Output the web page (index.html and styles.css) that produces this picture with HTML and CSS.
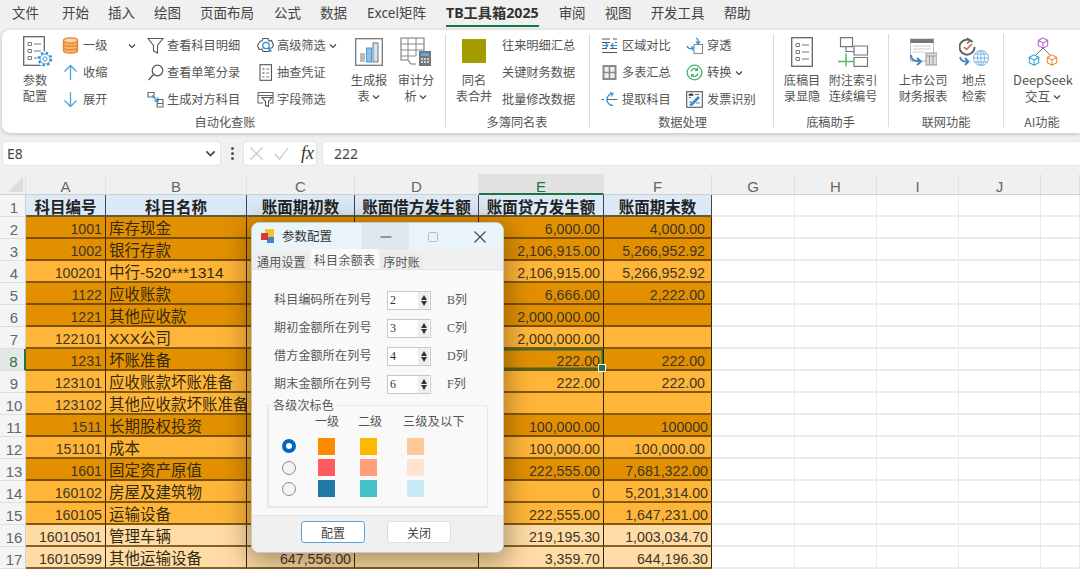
FILE: index.html
```html
<!DOCTYPE html>
<html lang="zh-CN">
<head>
<meta charset="utf-8">
<title>TB工具箱2025</title>
<link rel="stylesheet" href="styles.css">
</head>
<body>
<svg class="defs" aria-hidden="true">
  <symbol id="chev" viewBox="0 0 8 8"><path d="M1 2.5 4 5.5 7 2.5" fill="none" stroke="#444" stroke-width="1.2"/></symbol>
  <symbol id="gear" viewBox="0 0 20 20">
    <circle cx="10" cy="10" r="9.6" fill="#fff"/>
    <circle cx="10" cy="10" r="7.8" fill="none" stroke="#2e8fd8" stroke-width="2.6" stroke-dasharray="3 3.13"/>
    <circle cx="10" cy="10" r="6.2" fill="#fff" stroke="#2e8fd8" stroke-width="1.1"/>
    <circle cx="10" cy="10" r="2.7" fill="none" stroke="#2e8fd8" stroke-width="1.1"/>
  </symbol>
  <symbol id="cube" viewBox="0 0 14 14"><path d="M7 1 12.5 4v6.200L7 13 1.500 10.200V4ZM1.500 4 7 7l5.500-3M7 7v6" fill="none" stroke-width="1.200" stroke="currentColor"/></symbol>
  <symbol id="listdoc" viewBox="0 0 22 30">
    <rect x=".7" y=".7" width="20.600" height="28.600" fill="#fff" stroke="#666" stroke-width="1.300"/>
    <path d="M5 6.500h3.500v3H5zM5 13.500h3.500v3H5zM5 20.500h3.500v3H5z" fill="none" stroke="#777"/>
    <path d="M11 8h7M11 15h7M11 22h7" stroke="#777"/>
  </symbol>
</svg>
<div class="app">
  <nav class="menu">
    <span class="m-first">文件</span><span>开始</span><span>插入</span><span>绘图</span><span>页面布局</span><span class="m-gap">公式</span><span>数据</span><span class="m-gap">Excel矩阵</span><span class="on">TB工具箱2025</span><span>审阅</span><span>视图</span><span>开发工具</span><span>帮助</span>
  </nav>

  <section class="ribbon">
    <div class="group g1">
      <div class="tools">
        <div class="large c1">
          <div class="licon">
            <svg class="ic-params" viewBox="0 0 30 32"><use href="#listdoc" x="0" y="0" width="22" height="30"/><use href="#gear" x="14" y="15" width="16" height="16"/></svg>
          </div>
          <div class="ltext">参数<br>配置</div>
        </div>
        <div class="col c2">
          <div class="item wide">
            <svg class="ic" viewBox="0 0 17 17"><path d="M1.500 3.500v10c0 3.500 14 3.500 14 0v-10Z" fill="#f8b27a" stroke="#e8832a" stroke-width="1.300"/><ellipse cx="8.500" cy="3.500" rx="7" ry="2.600" fill="#fbd3a8" stroke="#e8832a" stroke-width="1.300"/><path d="M1.500 7c0 3 14 3 14 0M1.500 10.500c0 3 14 3 14 0" fill="none" stroke="#e8832a" stroke-width="1.300"/></svg>
            <span>一级</span><svg class="chev far" viewBox="0 0 8 8"><use href="#chev"/></svg>
          </div>
          <div class="item wide">
            <svg class="ic" viewBox="0 0 17 17"><path d="M8.500 16V1.500M2.500 7.500l6-6 6 6" fill="none" stroke="#49a6dd" stroke-width="1.300"/></svg>
            <span>收缩</span>
          </div>
          <div class="item wide">
            <svg class="ic" viewBox="0 0 17 17"><path d="M8.500 1v14.500M2.500 9.500l6 6 6-6" fill="none" stroke="#49a6dd" stroke-width="1.300"/></svg>
            <span>展开</span>
          </div>
        </div>
        <div class="col c3">
          <div class="item">
            <svg class="ic" viewBox="0 0 17 17"><path d="M1 1.500h15L10.500 8.500V16L6.500 14V8.500Z" fill="#fff" stroke="#555" stroke-width="1.100"/></svg>
            <span>查看科目明细</span>
          </div>
          <div class="item">
            <svg class="ic" viewBox="0 0 17 17"><circle cx="10.500" cy="6.500" r="5.300" fill="none" stroke="#555" stroke-width="1.200"/><path d="M6.500 10.500 1.500 16" stroke="#555" stroke-width="1.300"/></svg>
            <span>查看单笔分录</span>
          </div>
          <div class="item">
            <svg class="ic" viewBox="0 0 17 17"><path d="M1 1.500h6v4.500H1ZM10.500 8.500H16v7.500h-6ZM10.500 12.500H16" fill="#fff" stroke="#666" stroke-width="1.100"/><path d="M5 4.500 11 10M11 6.500V10H7.500" fill="none" stroke="#2e8fd8" stroke-width="1.300"/></svg>
            <span>生成对方科目</span>
          </div>
        </div>
        <div class="col c4">
          <div class="item">
            <svg class="ic" viewBox="0 0 17 17"><path d="M6 1.500h5l1 2.500 2.500-.5L16.500 8l-1.500 3-2 0-1 3.500h-6L5 12l-3 .5L.5 8.500 2 6l1.500-2H5Z" fill="none" stroke="#555" stroke-width="1.100"/><circle cx="9" cy="8.500" r="3.200" fill="#fff" stroke="#2e8fd8" stroke-width="1.300"/><path d="M11 11l3.500 3.500" stroke="#2e8fd8" stroke-width="1.500"/></svg>
            <span>高级筛选</span><svg class="chev" viewBox="0 0 8 8"><use href="#chev"/></svg>
          </div>
          <div class="item">
            <svg class="ic" viewBox="0 0 17 17"><rect x="3" y=".7" width="11.500" height="15.600" fill="#fff" stroke="#555" stroke-width="1.100"/><path d="M5.500 4h2v2h-2zM5.500 8h2v2h-2zM5.500 12h2v1.500h-2z" fill="#999"/><path d="M9 5h3.500M9 9h3.500M9 13h3.500" stroke="#888"/></svg>
            <span>抽查凭证</span>
          </div>
          <div class="item">
            <svg class="ic" viewBox="0 0 17 17"><path d="M1 1.500h15v10.500h-3M1 1.500V12h5M1 4.500h15" fill="none" stroke="#666" stroke-width="1.100"/><path d="M5 6.500h10l-3.500 4v5l-3-1v-4Z" fill="#fff" stroke="#555" stroke-width="1.100"/></svg>
            <span>字段筛选</span>
          </div>
        </div>
        <div class="large c5">
          <div class="licon">
            <svg class="ic-report" viewBox="0 0 28 28"><rect x=".7" y=".7" width="26.600" height="26.600" fill="#fff" stroke="#777" stroke-width="1.300"/><rect x="5" y="15" width="5" height="9" fill="#bbb"/><rect x="11.500" y="10" width="5" height="14" fill="#8cc3ea" stroke="#4a9ad6"/><rect x="18" y="5" width="5" height="19" fill="#cfe5f5" stroke="#777"/></svg>
          </div>
          <div class="ltext">生成报<br>表 <svg class="chev" viewBox="0 0 8 8"><use href="#chev"/></svg></div>
        </div>
        <div class="large c6">
          <div class="licon">
            <svg class="ic-audit" viewBox="0 0 32 30"><path d="M24 17V1H1v22h7l3 4h5" fill="#fff" stroke="#777" stroke-width="1.100"/><path d="M1 7h23M1 13h23M1 19h15M8 1v22M16 1v18" stroke="#888"/><rect x="19" y="14" width="12" height="15" fill="#777"/><rect x="21" y="16" width="8" height="3" fill="#5cb0e6"/><path d="M21 22h2M24 22h2M27 22h2M21 25h2M24 25h2M27 25h2" stroke="#eee" stroke-width="1.500"/></svg>
          </div>
          <div class="ltext">审计分<br>析 <svg class="chev" viewBox="0 0 8 8"><use href="#chev"/></svg></div>
        </div>
      </div>
      <div class="glabel">自动化查账</div>
    </div>
    <div class="sep"></div>

    <div class="group g2">
      <div class="tools">
        <div class="large c7">
          <div class="licon"><span class="olive"></span></div>
          <div class="ltext">同名<br>表合并</div>
        </div>
        <div class="col plain">
          <div class="item"><span>往来明细汇总</span></div>
          <div class="item"><span>关键财务数据</span></div>
          <div class="item"><span>批量修改数据</span></div>
        </div>
      </div>
      <div class="glabel">多簿同名表</div>
    </div>
    <div class="sep"></div>

    <div class="group g3">
      <div class="tools">
        <div class="col c8">
          <div class="item gap4">
            <svg class="ic" viewBox="0 0 17 17"><path d="M1 2h8M12 2h4M14 5.500h2M1 5.500h8M1 11.500h5M9 11.500h7M1 15.500h15" stroke="#555"/><path d="M1 8.500h6M4.500 6l2.500 2.500L4.500 11M16 8.500H10M12.500 6 10 8.500l2.500 2.500" fill="none" stroke="#2e8fd8" stroke-width="1.100"/></svg>
            <span>区域对比</span>
          </div>
          <div class="item gap4">
            <svg class="ic" viewBox="0 0 17 17"><rect x="1.500" y="1" width="14" height="15" fill="#8a8a8a"/><path d="M3.500 3h4.200V7.700H3.500zM9.300 3h4.200V7.700H9.300zM3.500 9.300h4.200v4.700H3.500zM9.300 9.300h4.200v4.700H9.300z" fill="#f2f2f2"/></svg>
            <span>多表汇总</span>
          </div>
          <div class="item gap4">
            <svg class="ic" viewBox="0 0 17 17"><path d="M12 2.500A6 6 0 1 0 12 14.500" fill="none" stroke="#2e8fd8" stroke-width="1.300"/><path d="M6 8.500h10.500M.5 8.500h2.500" stroke="#666"/><path d="M9 1.500l3 1-1.500 3" fill="none" stroke="#2e8fd8" stroke-width="1.100"/></svg>
            <span>提取科目</span>
          </div>
        </div>
        <div class="col c9">
          <div class="item gap4">
            <svg class="ic" viewBox="0 0 17 17"><rect x="8" y="7.500" width="8.500" height="9" fill="#fff" stroke="#888"/><path d="M1 9c1 3 4 3 6 2M5 9.500 7.500 11 6 13.500" fill="none" stroke="#2e8fd8" stroke-width="1.300"/><path d="M10 1c2 1 2.500 3 2 5M9.800 4.500 12 6.500 14 4.500" fill="none" stroke="#2e8fd8" stroke-width="1.300"/></svg>
            <span>穿透</span>
          </div>
          <div class="item gap4">
            <svg class="ic" viewBox="0 0 17 17"><circle cx="8.500" cy="8.500" r="7.300" fill="none" stroke="#45b36b" stroke-width="1.300"/><path d="M5 7.500A3.700 3.700 0 0 1 11.500 6M11.500 3.800V6.300H9M12 9.500A3.700 3.700 0 0 1 5.500 11M5.500 13.200V10.700H8" fill="none" stroke="#45b36b" stroke-width="1.200"/></svg>
            <span>转换</span><svg class="chev" viewBox="0 0 8 8"><use href="#chev"/></svg>
          </div>
          <div class="item gap4">
            <svg class="ic" viewBox="0 0 17 17"><rect x=".7" y=".7" width="15.600" height="15.600" fill="#fff" stroke="#555" stroke-width="1.100"/><path d="M3 3h4v1.500H3zM3 6.500h2M9 3.500h4" stroke="#666"/><path d="M3 14 12 5l2 2-8 8Z" fill="#2e8fd8"/><path d="M3 11h3M10 12h4" stroke="#777"/></svg>
            <span>发票识别</span>
          </div>
        </div>
      </div>
      <div class="glabel">数据处理</div>
    </div>
    <div class="sep"></div>

    <div class="group g4">
      <div class="tools">
        <div class="large c7">
          <div class="licon"><svg class="ic-list" viewBox="0 0 22 30"><use href="#listdoc"/></svg></div>
          <div class="ltext">底稿目<br>录显隐</div>
        </div>
        <div class="large c10">
          <div class="licon">
            <svg class="ic-tree" viewBox="0 0 31 30"><path d="M2.500.7h12v9h-12ZM16 9h13.500v9H16ZM16 20.500h13.500v8.800H16ZM8 10v4.500h8" fill="#fff" stroke="#777" stroke-width="1.200"/><path d="M0 24.500h16M8 16.500v13" stroke="#5cb85c" stroke-width="1.500" fill="none"/></svg>
          </div>
          <div class="ltext">附注索引<br>连续编号</div>
        </div>
      </div>
      <div class="glabel">底稿助手</div>
    </div>
    <div class="sep"></div>

    <div class="group g5">
      <div class="tools">
        <div class="large c10">
          <div class="licon">
            <svg class="ic-web" viewBox="0 0 27 28"><rect x=".5" y="1" width="23" height="22" fill="#fff" stroke="#bbb"/><rect x=".5" y="1" width="23" height="4" fill="#777"/><path d="M3 8h18M3 11h18M3 14h12" stroke="#ccc"/><rect x="16" y="15" width="11" height="12" fill="#ddd" stroke="#999"/><path d="M16 18h11M19.500 18v9M23 18v9" stroke="#999"/><path d="M1 17c0 5 4 6.500 9 6M7 20l4 3.500-4 3.500" fill="none" stroke="#3d87c9" stroke-width="2"/></svg>
          </div>
          <div class="ltext">上市公司<br>财务报表</div>
        </div>
        <div class="large c7">
          <div class="licon">
            <svg class="ic-globe" viewBox="0 0 30 30"><path d="M13.500 5A7.500 7.500 0 1 0 15.500 10" fill="none" stroke="#666" stroke-width="2"/><path d="M8 1l3.500 2.500L8 6.500" fill="none" stroke="#666" stroke-width="1.500"/><path d="M5 10l2.500 2.500L13 7" fill="none" stroke="#e2583e" stroke-width="1.500"/><path d="M1 20c1 4 4 5 8 4.500M6 21l3.500 3.500L6 28" fill="none" stroke="#3d87c9" stroke-width="1.800"/><circle cx="22" cy="21" r="7.500" fill="#fff" stroke="#7fb3de"/><ellipse cx="22" cy="21" rx="3.500" ry="7.500" fill="none" stroke="#7fb3de"/><path d="M14.500 21h15M15.500 17h13M15.500 25h13M22 13.500v15" stroke="#7fb3de"/></svg>
          </div>
          <div class="ltext">地点<br>检索</div>
        </div>
      </div>
      <div class="glabel">联网功能</div>
    </div>
    <div class="sep"></div>

    <div class="group g6">
      <div class="tools">
        <div class="large c11">
          <div class="licon">
            <svg class="ic-deep" viewBox="0 0 30 30"><path d="M15 11 8 18M15 11l7 7" stroke="#777"/><use href="#cube" x="9" y="0" width="12" height="12" class="cu-p"/><use href="#cube" x="0" y="17" width="12" height="12" class="cu-b"/><use href="#cube" x="18" y="17" width="12" height="12" class="cu-o"/></svg>
          </div>
          <div class="ltext deep">DeepSeek<br>交互 <svg class="chev" viewBox="0 0 8 8"><use href="#chev"/></svg></div>
        </div>
      </div>
      <div class="glabel">AI功能</div>
    </div>
  </section>

  <section class="formula">
    <div class="namebox"><span>E8</span><svg class="chev big" viewBox="0 0 8 8"><use href="#chev"/></svg></div>
    <div class="dots"><i></i><i></i><i></i></div>
    <div class="fxbox">
      <svg class="fxmark" viewBox="0 0 15 15"><path d="M1.500 1.500l12 12M13.500 1.500l-12 12" stroke="#c4c4c4" stroke-width="1.200"/></svg>
      <svg class="fxmark" viewBox="0 0 15 15"><path d="M1 8l4.500 5L14 2" fill="none" stroke="#c4c4c4" stroke-width="1.200"/></svg>
      <em>fx</em>
    </div>
    <div class="fxvalue">222</div>
  </section>

  <main class="sheet">
    <div class="row heads">
      <div class="corner"><span></span></div>
      <div>A</div><div>B</div><div>C</div><div>D</div><div class="cur">E</div><div>F</div><div>G</div><div>H</div><div>I</div><div>J</div><div></div>
    </div>
    <div class="row title"><b>1</b><div>科目编号</div><div>科目名称</div><div>账面期初数</div><div>账面借方发生额</div><div>账面贷方发生额</div><div>账面期末数</div><i></i><i></i><i></i><i></i><i></i></div>
    <div class="row deep"><b>2</b><div class="num">1001</div><div class="nm">库存现金</div><div></div><div></div><div class="num">6,000.00</div><div class="num sp">4,000.00</div><i></i><i></i><i></i><i></i><i></i></div>
    <div class="row deep"><b>3</b><div class="num">1002</div><div class="nm">银行存款</div><div></div><div></div><div class="num">2,106,915.00</div><div class="num sp">5,266,952.92</div><i></i><i></i><i></i><i></i><i></i></div>
    <div class="row light"><b>4</b><div class="num">100201</div><div class="nm">中行-520***1314</div><div></div><div></div><div class="num">2,106,915.00</div><div class="num sp">5,266,952.92</div><i></i><i></i><i></i><i></i><i></i></div>
    <div class="row deep"><b>5</b><div class="num">1122</div><div class="nm">应收账款</div><div></div><div></div><div class="num">6,666.00</div><div class="num sp">2,222.00</div><i></i><i></i><i></i><i></i><i></i></div>
    <div class="row deep"><b>6</b><div class="num">1221</div><div class="nm">其他应收款</div><div></div><div></div><div class="num">2,000,000.00</div><div></div><i></i><i></i><i></i><i></i><i></i></div>
    <div class="row light"><b>7</b><div class="num">122101</div><div class="nm">XXX公司</div><div></div><div></div><div class="num">2,000,000.00</div><div></div><i></i><i></i><i></i><i></i><i></i></div>
    <div class="row deep"><b class="cur">8</b><div class="num">1231</div><div class="nm">坏账准备</div><div></div><div></div><div class="num active">222.00</div><div class="num sp">222.00</div><i></i><i></i><i></i><i></i><i></i></div>
    <div class="row light"><b>9</b><div class="num">123101</div><div class="nm">应收账款坏账准备</div><div></div><div></div><div class="num">222.00</div><div class="num sp">222.00</div><i></i><i></i><i></i><i></i><i></i></div>
    <div class="row light"><b>10</b><div class="num">123102</div><div class="nm">其他应收款坏账准备</div><div></div><div></div><div></div><div></div><i></i><i></i><i></i><i></i><i></i></div>
    <div class="row deep"><b>11</b><div class="num">1511</div><div class="nm">长期股权投资</div><div></div><div></div><div class="num">100,000.00</div><div class="num">100000</div><i></i><i></i><i></i><i></i><i></i></div>
    <div class="row light"><b>12</b><div class="num">151101</div><div class="nm">成本</div><div></div><div></div><div class="num">100,000.00</div><div class="num sp">100,000.00</div><i></i><i></i><i></i><i></i><i></i></div>
    <div class="row deep"><b>13</b><div class="num">1601</div><div class="nm">固定资产原值</div><div></div><div></div><div class="num">222,555.00</div><div class="num">7,681,322.00</div><i></i><i></i><i></i><i></i><i></i></div>
    <div class="row light"><b>14</b><div class="num">160102</div><div class="nm">房屋及建筑物</div><div></div><div></div><div class="num">0</div><div class="num">5,201,314.00</div><i></i><i></i><i></i><i></i><i></i></div>
    <div class="row light"><b>15</b><div class="num">160105</div><div class="nm">运输设备</div><div></div><div></div><div class="num">222,555.00</div><div class="num">1,647,231.00</div><i></i><i></i><i></i><i></i><i></i></div>
    <div class="row pale"><b>16</b><div class="num">16010501</div><div class="nm">管理车辆</div><div></div><div></div><div class="num">219,195.30</div><div class="num">1,003,034.70</div><i></i><i></i><i></i><i></i><i></i></div>
    <div class="row pale"><b>17</b><div class="num">16010599</div><div class="nm">其他运输设备</div><div class="num">647,556.00</div><div></div><div class="num">3,359.70</div><div class="num">644,196.30</div><i></i><i></i><i></i><i></i><i></i></div>

    <div class="dialog">
      <header class="dlg-title">
        <svg class="dlg-logo" viewBox="0 0 15 15"><rect x="5" y="0" width="9" height="8" fill="#f2c230"/><rect x="7" y="8" width="7" height="6" fill="#3f7fd6"/><rect x="1" y="4" width="7" height="7" fill="#d8383a"/></svg>
        <span class="dlg-name">参数配置</span>
        <span class="winbtn hover"><svg viewBox="0 0 12 12"><path d="M.5 6h11" stroke="#444" stroke-width="1"/></svg></span>
        <span class="winbtn"><svg viewBox="0 0 12 12"><rect x="1.500" y="1.500" width="9" height="9" rx="1" fill="none" stroke="#bbb"/></svg></span>
        <span class="winbtn"><svg viewBox="0 0 12 12"><path d="M.5.5l11 11M11.500.5l-11 11" stroke="#444" stroke-width="1.100"/></svg></span>
      </header>
      <div class="tabs">
        <span>通用设置</span><span class="on">科目余额表</span><span>序时账</span>
      </div>
      <div class="dlg-body">
        <div class="field"><label>科目编码所在列号</label><div class="spin"><span>2</span><div class="arrows"><i class="up"></i><i class="dn"></i></div></div><span class="suffix">B列</span></div>
        <div class="field"><label>期初金额所在列号</label><div class="spin"><span>3</span><div class="arrows"><i class="up"></i><i class="dn"></i></div></div><span class="suffix">C列</span></div>
        <div class="field"><label>借方金额所在列号</label><div class="spin"><span>4</span><div class="arrows"><i class="up"></i><i class="dn"></i></div></div><span class="suffix">D列</span></div>
        <div class="field"><label>期末金额所在列号</label><div class="spin"><span>6</span><div class="arrows"><i class="up"></i><i class="dn"></i></div></div><span class="suffix">F列</span></div>
        <fieldset class="levels">
          <legend>各级次标色</legend>
          <div class="lv-grid">
            <span></span><span class="lv-head">一级</span><span class="lv-head">二级</span><span class="lv-head wide3">三级及以下</span>
            <span class="radio sel"></span><span class="sw s11"></span><span class="sw s12"></span><span class="sw s13"></span>
            <span class="radio"></span><span class="sw s21"></span><span class="sw s22"></span><span class="sw s23"></span>
            <span class="radio"></span><span class="sw s31"></span><span class="sw s32"></span><span class="sw s33"></span>
          </div>
        </fieldset>
      </div>
      <footer class="dlg-foot">
        <button class="btn primary">配置</button>
        <button class="btn">关闭</button>
      </footer>
    </div>
  </main>
</div>
</body>
</html>
```

FILE: styles.css
```css
* { box-sizing: border-box; }
html, body { margin: 0; height: 100%; }
body {
  width: 1080px;
  height: 569px;
  overflow: hidden;
  background: #f0f0f0;
  color: #444;
  font-family: "Liberation Sans", "Noto Sans CJK SC", sans-serif;
}
.defs { position: absolute; width: 0; height: 0; }
.app { display: flex; flex-direction: column; width: 1080px; height: 569px; overflow: hidden; }

/* menu */
.menu {
  flex: none; height: 30px; display: flex; gap: 19px; padding: 0 0 0 12px;
  font-family: "Noto Sans", "Noto Sans CJK SC", sans-serif;
  font-size: 13.5px; line-height: 26px; color: #444; white-space: nowrap;
}
.menu span { height: 27px; }
.menu .m-first { margin-right: 4px; }
.menu .m-gap { margin-left: 1px; }
.menu .on { font-size: 14.2px; font-weight: 700; color: #333; border-bottom: 2px solid #107c41; margin-left: 1px; margin-right: 1px; }

/* ribbon */
.ribbon {
  flex: none; height: 103px; margin-left: 2px; padding-top: 2px;
  display: flex; background: #fff; border-radius: 8px 0 0 8px;
  box-shadow: 0 1px 4px rgba(0,0,0,.22);
  font-family: "Noto Sans CJK SC", sans-serif;
  font-size: 12.2px; color: #555; white-space: nowrap; overflow: hidden;
}
.group { flex: none; display: flex; flex-direction: column; }
.g1 { width: 443px; padding-left: 16px; }
.g2 { width: 143px; padding-left: 5px; }
.g3 { width: 183px; padding-left: 10px; }
.g4 { width: 114px; padding-left: 5px; }
.g5 { width: 114px; padding-left: 6px; }
.g6 { width: 76px; padding-left: 6px; }
.sep { flex: none; width: 1px; margin: 2px 0 6px; background: #dcdcdc; }
.tools { display: flex; height: 81px; flex: none; }
.glabel { height: 18px; line-height: 18px; text-align: center; padding-right: 6px; }
.g1 .glabel { padding-right: 13px; }
.g3 .glabel { padding-right: 8px; }

.large { flex: none; display: flex; flex-direction: column; align-items: center; }
.licon { height: 40px; display: flex; align-items: center; justify-content: center; }
.ltext { text-align: center; line-height: 16px; }
.ltext.deep { font-size: 12.800px; }
.col { flex: none; display: flex; flex-direction: column; }
.item { height: 27px; display: flex; align-items: center; gap: 3px; padding-left: 1px; }
.item > span { margin-top: -2px; }
.item.wide { padding-left: 2px; gap: 4px; }
.item.gap4 { gap: 4px; }
.ic { width: 17px; height: 17px; flex: none; }
.chev { width: 8px; height: 8px; display: inline-block; vertical-align: 0; }
.item .chev.far { margin-left: 17px; }
.c1 { width: 34px; margin-right: 8px; }
.c2 { width: 86px; }
.c3 { width: 110px; }
.c4 { width: 89px; }
.c5 { width: 48px; }
.c6 { width: 46px; }
.c7 { width: 46px; }
.c8 { width: 85px; }
.c9 { width: 80px; }
.c10 { width: 56px; }
.c11 { width: 66px; }
.plain { margin-left: 4px; }
.ic-params { width: 30px; height: 32px; margin-left: 5px; }
.ic-report { width: 28px; height: 28px; }
.ic-audit { width: 32px; height: 30px; }
.olive { display: block; width: 24px; height: 24px; background: #a39b00; margin-top: -2px; }
.ic-list { width: 22px; height: 30px; }
.ic-tree { width: 31px; height: 30px; }
.ic-web { width: 27px; height: 28px; }
.ic-globe { width: 30px; height: 30px; }
.ic-deep { width: 30px; height: 30px; }
.cu-p { color: #b565cf; }
.cu-b { color: #2e9fe0; }
.cu-o { color: #ef8a2b; }

/* formula bar */
.formula {
  flex: none; height: 25px; margin-top: 8px; display: flex; align-items: stretch;
  padding-left: 2px; font-size: 14px; color: #444;
}
.namebox, .fxbox, .fxvalue { background: #fff; border: 1px solid #e4e4e4; border-radius: 4px; }
.namebox { width: 219px; display: flex; align-items: center; justify-content: space-between; padding: 0 4px 0 4px; font-family: "Noto Sans", sans-serif; }
.chev.big { width: 11px; height: 11px; }
.dots { width: 22px; display: flex; flex-direction: column; align-items: center; justify-content: center; gap: 2px; }
.dots i { width: 3px; height: 3px; border-radius: 50%; background: #555; }
.fxbox { width: 74px; display: flex; align-items: center; padding-left: 5px; gap: 10px; }
.fxmark { width: 15px; height: 15px; flex: none; }
.fxbox em { font: italic 400 18px "Liberation Serif", serif; color: #333; margin-left: 2px; }
.fxvalue { flex: 1; margin-left: 5px; padding-left: 11px; line-height: 23px; font-family: "Noto Sans", sans-serif; border-right: 0; border-radius: 4px 0 0 4px; }

/* sheet */
.sheet { position: relative; flex: none; margin-top: 8px; height: 395px; background: #fff; overflow: hidden; }
.row {
  display: grid; height: 22px;
  grid-template-columns: 26px 80px 141px 108px 124px 125px 108px 83px 82px 82px 82px 39px;
  grid-template-rows: 100%;
  font-size: 14.200px; line-height: 21px; color: #333;
}
.row > * { min-width: 0; white-space: nowrap; padding-top: 2px; }
.row > b { font-weight: 400; font-size: 15px; color: #666; background: #f3f4f4; text-align: center; border-bottom: 1px solid #dedede; border-right: 1px solid #d0d0d0; padding-left: 3px; }
.row > b.cur { color: #217346; background: #e4e8e6; border-right: 2px solid #217346; }
.row > i { border-right: 1px solid #ebebeb; border-bottom: 2px solid #ebebeb; background: #fff; }
.row > div { border-right: 1px solid #2f2410; border-bottom: 2px solid rgba(90,58,0,.75); }
.row > div:first-child + div { border-right-color: rgba(70,50,20,.55); }

.heads { height: 21px; background: #f0f0f0; font-size: 15px; color: #666; }
.heads > div { text-align: center; border: 0; border-right: 1px solid #e0e0e0 !important; border-bottom: 1px solid #cfcfcf !important; background: #f0f0f0; }
.heads .cur { background: #e2e2e2; color: #217346; border-bottom: 2px solid #217346 !important; }
.corner { position: relative; }
.corner span { position: absolute; right: 2px; bottom: 2px; width: 0; height: 0; border-style: solid; border-width: 0 0 15px 15px; border-color: transparent transparent #dcdcdc transparent; }

.title > div { background: #dce9f6; text-align: center; font-family: "Noto Sans CJK SC", sans-serif; font-weight: 700; font-size: 15.500px; color: #222; border-bottom: 2px solid #5f5a40; padding-top: 1px; }
.title > div:nth-of-type(n) { border-right-color: #40464f; }
.deep > div { background: #e29000; }
.light > div { background: #ffb638; }
.pale > div { background: #ffdca6; }
.num { text-align: right; padding-right: 3px; color: #3d3526; }
.num.sp { padding-right: 6px; }
.row > .nm { padding: 1px 0 0 3px; font-size: 15.500px; font-family: "Liberation Sans", "Noto Sans CJK SC", sans-serif; color: #33290f; overflow: visible; }
.active { position: relative; box-shadow: inset 0 0 0 1.500px #217346; }
.active::after { content: ""; position: absolute; right: -3px; bottom: -3px; width: 6px; height: 6px; background: #217346; border: 1px solid #fff; z-index: 2; }

/* dialog */
.dialog {
  position: absolute; left: 251px; top: 48px; width: 253px; height: 331px;
  display: flex; flex-direction: column; overflow: hidden;
  background: #f9f9f9; border-radius: 8px; border: 1px solid #c9c9c9;
  box-shadow: 0 6px 26px 4px rgba(40,25,0,.38);
  font-family: "Liberation Serif", "Noto Sans CJK SC", serif; font-size: 12px; color: #555;
}
.dlg-title { flex: none; height: 27px; display: flex; align-items: center; background: #e9f4f8; color: #333; }
.dlg-logo { width: 15px; height: 15px; margin-left: 8px; flex: none; }
.dlg-name { width: 86px; margin-left: 7px; margin-top: -3px; font-family: "Noto Sans CJK SC", sans-serif; font-size: 12.500px; }
.winbtn { width: 47px; height: 27px; display: flex; align-items: center; justify-content: center; flex: none; }
.winbtn.hover { background: #dfe9ed; }
.winbtn svg { width: 12px; height: 12px; }
.tabs { flex: none; height: 20px; display: flex; align-items: flex-end; background: #f0f0f0; padding-left: 2px; border-bottom: 1px solid #e4e4e4; letter-spacing: .2px; }
.tabs span { padding: 0 3px; height: 17px; line-height: 23px; background: #ececec; margin-right: 1px; overflow: hidden; }
.tabs .on { height: 20px; padding: 0 4px 0 3px; margin: 0 1px 0 1px; background: #fafafa; line-height: 25px; letter-spacing: .3px; }
.dlg-body { flex: 1; padding: 21px 16px 0 22px; min-height: 0; }
.field { display: flex; align-items: center; height: 19px; margin-bottom: 9px; }
.field label { width: 113px; letter-spacing: .2px; padding-bottom: 4px; }
.spin { width: 44px; height: 19px; display: flex; justify-content: space-between; background: #fff; border: 1px solid #c8c8c8; padding-left: 2px; color: #333; line-height: 16px; }
.arrows { width: 11px; background: #eee; display: flex; flex-direction: column; align-items: center; justify-content: space-around; padding: 2px 0; margin-right: 1px; }
.arrows i { width: 0; height: 0; border-left: 3.500px solid transparent; border-right: 3.500px solid transparent; }
.arrows .up { border-bottom: 5px solid #333; }
.arrows .dn { border-top: 5px solid #333; }
.suffix { margin-left: 16px; padding-bottom: 3px; }
.levels { margin: -5px 0 0 -7px; padding: 0; width: 221px; height: 110px; border: 2px solid #e8e8e8; border-width: 1px 1px 2px 2px; min-width: 0; }
.levels legend { padding: 0 2px; margin-left: 2px; margin-top: -1px; font-family: "Noto Sans CJK SC", serif; line-height: 14px; letter-spacing: .2px; }
.lv-grid { display: grid; grid-template-columns: 33px 43px 45px 1fr; grid-template-rows: 24px 22px 21px 21px; align-items: center; margin: -1px 0 0 13px; }
.lv-head { align-self: start; line-height: 20px; white-space: nowrap; font-family: "Noto Sans CJK SC", serif; }
.lv-head.wide3 { letter-spacing: .4px; }
.radio { width: 14px; height: 14px; border-radius: 50%; border: 1px solid #8a8a8a; background: #f3f3f3; }
.radio.sel { border: 4px solid #0067c0; background: #fff; }
.sw { display: block; width: 17px; height: 17px; margin-left: 3px; }
.lv-grid .sw:nth-child(4n+3) { margin-left: 2px; }
.lv-grid .sw:nth-child(4n) { margin-left: 4px; }
.s11 { background: #ff8a00; } .s12 { background: #ffb800; } .s13 { background: #ffc999; }
.s21 { background: #ff5b5f; } .s22 { background: #ff9f7a; } .s23 { background: #ffe3d1; }
.s31 { background: #1f7aa3; } .s32 { background: #43c0c8; } .s33 { background: #c8ebf5; }
.dlg-foot { flex: none; height: 37px; display: flex; gap: 22px; padding: 5px 0 0 49px; background: #f0f0f0; border-top: 1px solid #e6e6e6; }
.btn { width: 64px; height: 22px; padding: 0; background: #fff; border: 1px solid #ddd; border-radius: 3px; font: 12px "Noto Sans CJK SC", sans-serif; color: #444; }
.btn.primary { border-color: #5aa2dc; }
```
